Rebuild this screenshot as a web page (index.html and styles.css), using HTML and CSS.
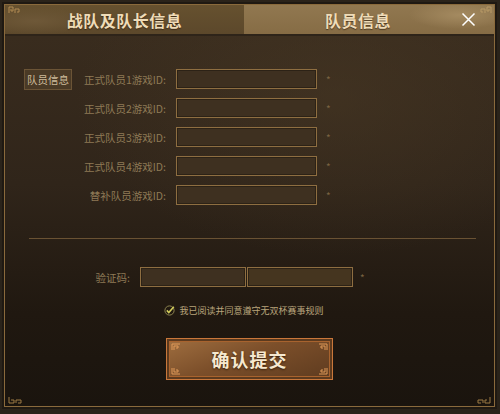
FILE: index.html
```html
<!DOCTYPE html>
<html lang="zh-CN">
<head>
    <meta charset="UTF-8">
    <title>队员信息</title>
    <link rel="stylesheet" href="styles.css">
</head>
<body>
    <div class="frame">
        <!-- 顶部标签 -->
        <div class="tabs">
            <div class="tab">
                <svg class="orn orn-tl" width="12" height="8" viewBox="0 0 12 8"><path d="M1 7V1h4v4H3V3M7 7V3h4v3H9" fill="none" stroke="#b08a52" stroke-width="1"/></svg>
                <span class="tab-text">战队及队长信息</span>
            </div>
            <div class="tab tab-on">
                <span class="tab-text">队员信息</span>
                <svg class="close" width="15" height="15" viewBox="0 0 15 15"><path d="M1.5 1.5l12 12M13.5 1.5l-12 12" stroke="#fff" stroke-width="1.5"/></svg>
                <svg class="orn orn-tr" width="12" height="8" viewBox="0 0 12 8"><path d="M11 7V1H7v4h2V3M5 7V3H1v3h2" fill="none" stroke="#b89a66" stroke-width="1"/></svg>
            </div>
        </div>

        <div class="content">
            <!-- 队员信息 -->
            <div class="members">
                <div class="badge">队员信息</div>
                <ul class="rows">
                    <li><label>正式队员1游戏ID:</label><span class="ipt"></span><i>*</i></li>
                    <li><label>正式队员2游戏ID:</label><span class="ipt"></span><i>*</i></li>
                    <li><label>正式队员3游戏ID:</label><span class="ipt"></span><i>*</i></li>
                    <li><label>正式队员4游戏ID:</label><span class="ipt"></span><i>*</i></li>
                    <li><label>替补队员游戏ID:</label><span class="ipt"></span><i>*</i></li>
                </ul>
            </div>

            <div class="line"></div>

            <!-- 验证码 -->
            <div class="code-row">
                <label>验证码:</label>
                <span class="ipt ipt-code"></span>
                <span class="ipt ipt-code ipt-img"></span>
                <i>*</i>
            </div>

            <div class="agree">
                <svg width="11" height="11" viewBox="0 0 11 11"><circle cx="5.5" cy="5.5" r="4.6" fill="none" stroke="#8d8450" stroke-width="1"/><path d="M2.8 5.4l2 2.1L9.8 1.8" fill="none" stroke="#d2cc5c" stroke-width="1.6"/></svg>
                <span>我已阅读并同意遵守无双杯赛事规则</span>
            </div>

            <button class="btn-submit">
                <svg class="c c-tl" width="10" height="8" viewBox="0 0 10 8"><path d="M1 7V1h8M3 7V3h4v2H5" fill="none" stroke="#e09a58" stroke-width="1"/></svg>
                <svg class="c c-tr" width="10" height="8" viewBox="0 0 10 8"><path d="M9 7V1H1M7 7V3H3v2h2" fill="none" stroke="#e09a58" stroke-width="1"/></svg>
                <svg class="c c-bl" width="10" height="8" viewBox="0 0 10 8"><path d="M1 1v6h8M3 1v4h4V3H5" fill="none" stroke="#e09a58" stroke-width="1"/></svg>
                <svg class="c c-br" width="10" height="8" viewBox="0 0 10 8"><path d="M9 1v6H1M7 1v4H3V3h2" fill="none" stroke="#e09a58" stroke-width="1"/></svg>
                确认提交
            </button>
        </div>

        <svg class="orn orn-bl" width="14" height="7" viewBox="0 0 14 7"><path d="M1 0v6h5V3H3M8 6V3h5v3h-3" fill="none" stroke="#9c7a45" stroke-width="1"/></svg>
        <svg class="orn orn-br" width="14" height="7" viewBox="0 0 14 7"><path d="M13 0v6H8V3h2M6 6V3H1v3h3" fill="none" stroke="#9c7a45" stroke-width="1"/></svg>
    </div>
</body>
</html>
```

FILE: styles.css
```css
body {
    margin: 0;
    width: 500px;
    height: 414px;
    overflow: hidden;
    background-color: #2a231a;
    font-family: "Noto Sans CJK SC", "Noto Sans", sans-serif;
}
.frame {
    position: relative;
    box-sizing: border-box;
    width: 491px;
    height: 403px;
    margin: 4px 5px 0 4px;
    border: 1px solid #8a6a3c;
    box-shadow: 0 0 0 2px #1f1912;
    display: flex;
    flex-direction: column;
}

/* 标签 */
.tabs {
    display: flex;
    height: 29px;
    border-bottom: 2px solid #2e2419;
}
.tab {
    position: relative;
    flex: 1;
    display: flex;
    align-items: center;
    justify-content: center;
    background: radial-gradient(ellipse 60px 14px at 30px 16px, #6e5838 0%, rgba(110,88,56,0) 100%),
                linear-gradient(180deg, #66512f 0%, #5c482b 100%);
}
.tab-on {
    padding-left: 11px;
    background: radial-gradient(ellipse 50px 14px at 215px 10px, #a48a60 0%, rgba(164,138,96,0) 100%),
                linear-gradient(180deg, #917850 0%, #866c45 100%);
}
.tab-text {
    flex: 1;
    text-align: center;
    font-size: 16px;
    font-weight: bold;
    letter-spacing: 0.5px;
    color: #efdcb8;
    text-shadow: 0 1px 1px rgba(40, 25, 10, 0.6);
}
.close {
    margin-right: 18px;
}
.orn {
    position: absolute;
}
.orn-tl {
    left: 3px;
    top: 1px;
}
.orn-tr {
    right: 2px;
    top: 1px;
}
.orn-bl {
    left: 3px;
    bottom: 2px;
}
.orn-br {
    right: 3px;
    bottom: 2px;
}

/* 内容 */
.content {
    flex: 1;
    display: flex;
    flex-direction: column;
    padding-top: 33px;
    background: radial-gradient(ellipse 260px 160px at 330px 60px, rgba(72,56,36,0.55) 0%, rgba(72,56,36,0) 100%),
                linear-gradient(180deg, #392c1e 0%, #30251a 40%, #201810 75%, #1a140e 100%);
}
.members {
    display: flex;
    padding-left: 19px;
}
.badge {
    box-sizing: border-box;
    width: 48px;
    height: 21px;
    line-height: 19px;
    text-align: center;
    font-size: 10.5px;
    color: #cdbb9b;
    background-color: #4a3a26;
    border: 1px solid #6b5436;
}
.rows {
    margin: 0;
    padding: 0;
    list-style: none;
}
.rows li {
    display: flex;
    align-items: center;
    height: 20px;
    margin-bottom: 9px;
}
.rows li:last-child {
    margin-bottom: 0;
}
.rows label,
.code-row label {
    width: 94px;
    margin-right: 10px;
    text-align: right;
    font-size: 10.5px;
    color: #8e7a56;
}
.ipt {
    box-sizing: border-box;
    width: 141px;
    height: 20px;
    background-color: #3e3020;
    border: 1px solid #8e6e41;
    box-shadow: inset 0 0 0 1px #2c2216;
}
.rows i,
.code-row i {
    margin-left: 9px;
    font-style: normal;
    font-size: 10px;
    color: #7a6342;
}

.line {
    height: 1px;
    margin: 33px 18px 0 24px;
    background-color: #6a5233;
}

.code-row {
    display: flex;
    align-items: center;
    height: 20px;
    margin-top: 28px;
    padding-left: 31px;
}
.ipt-code {
    width: 106px;
}
.ipt-img {
    margin-left: 1px;
    background-color: #45351f;
}
.code-row i {
    margin-left: 7px;
}

.agree {
    display: flex;
    align-items: center;
    justify-content: center;
    height: 12px;
    margin-top: 17px;
    padding-right: 11px;
    font-size: 9px;
    color: #b8a47c;
}
.agree svg {
    margin-right: 4px;
}

.btn-submit {
    position: relative;
    align-self: center;
    width: 167px;
    height: 42px;
    margin-top: 22px;
    padding: 0;
    border: 1px solid #c9773a;
    box-shadow: inset 0 0 0 2px #5c3a1e, inset 0 0 0 3px #a8632e;
    background: linear-gradient(160deg, #a06f40 0%, #7c4f2a 45%, #5e3b1f 100%);
    font-family: "Noto Sans CJK SC", sans-serif;
    font-size: 18px;
    font-weight: bold;
    letter-spacing: 1px;
    color: #f6e8cf;
    text-shadow: 0 1px 2px rgba(40, 20, 5, 0.8);
    cursor: pointer;
    outline: none;
}
.btn-submit .c {
    position: absolute;
}
.c-tl { left: 4px; top: 4px; }
.c-tr { right: 4px; top: 4px; }
.c-bl { left: 4px; bottom: 4px; }
.c-br { right: 4px; bottom: 4px; }
```
